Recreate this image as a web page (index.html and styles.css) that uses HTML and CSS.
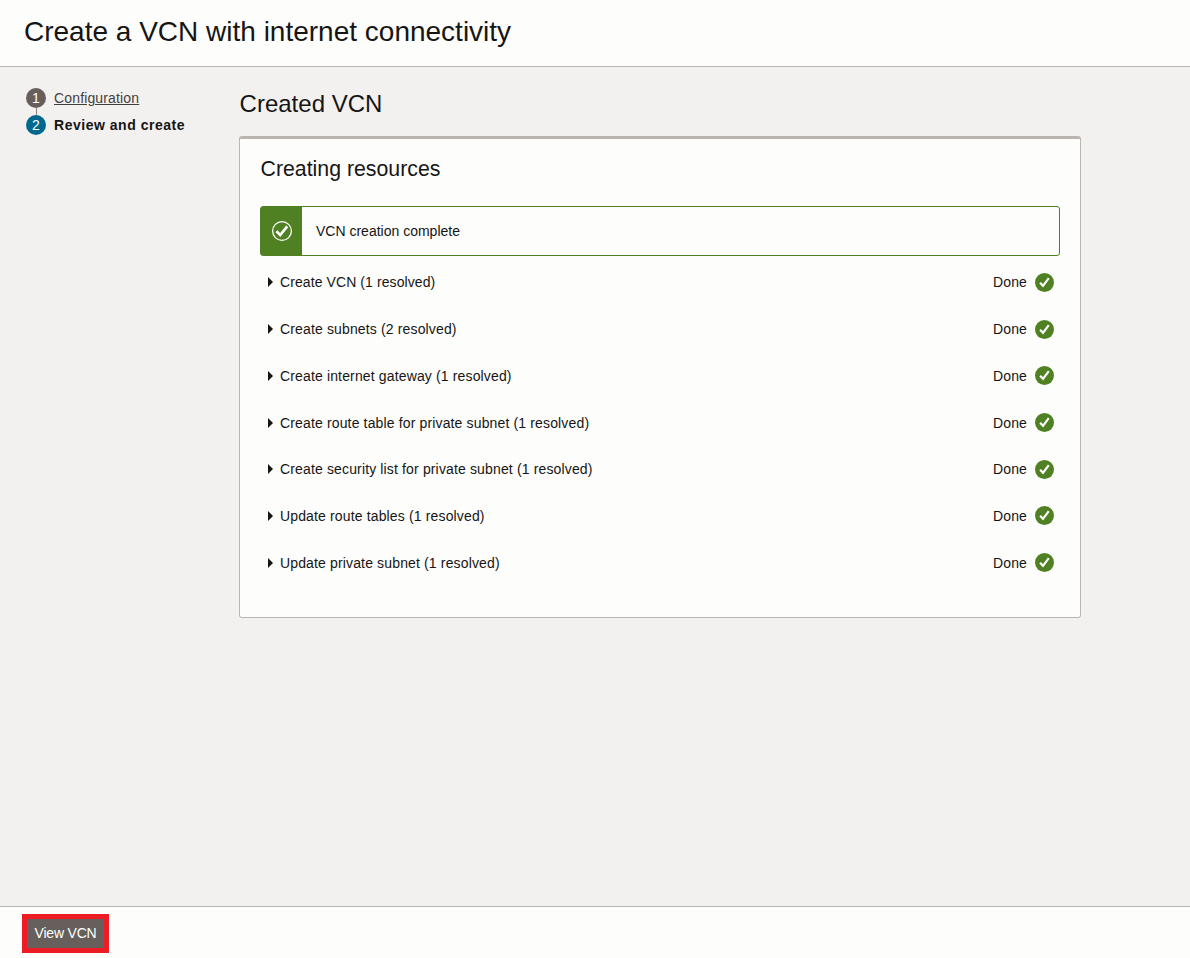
FILE: index.html
```html
<!DOCTYPE html>
<html lang="en">
<head>
<meta charset="utf-8">
<title>Create a VCN with internet connectivity</title>
<link rel="stylesheet" href="styles.css">
</head>
<body>
<svg class="defs" aria-hidden="true">
  <symbol id="done" viewBox="0 0 19 19"><circle cx="9.5" cy="9.5" r="9.5" fill="#4f8122"/><path d="M5.1 9.8 8 12.8 13.8 5.2" fill="none" stroke="#fff" stroke-width="2.2"/></symbol>
  <symbol id="caret" viewBox="0 0 5 10"><path d="M0 0 5 5 0 10Z" fill="#161513"/></symbol>
</svg>
<header class="header"><h1 class="title">Create a VCN with internet connectivity</h1></header>
<div class="body">
  <nav class="steps">
    <div class="step"><span class="num">1</span><a class="link">Configuration</a></div>
    <div class="connector"></div>
    <div class="step current"><span class="num">2</span><span class="label">Review and create</span></div>
  </nav>
  <main class="main">
    <h2 class="heading">Created VCN</h2>
    <section class="card">
      <h3 class="subheading">Creating resources</h3>
      <div class="notice">
        <div class="notice-icon"><svg width="22" height="22" viewBox="0 0 22 22" fill="none" stroke="#fff"><circle cx="11" cy="11" r="9.4" stroke-width="1.3"/><path d="M5.4 11.2 9.2 15 16.2 6.4" stroke-width="2.7"/></svg></div>
        <div class="notice-text">VCN creation complete</div>
      </div>
      <div class="rows">
        <div class="row"><svg class="caret"><use href="#caret"/></svg><span class="name">Create VCN (1 resolved)</span><span class="status">Done</span><svg class="done"><use href="#done"/></svg></div>
        <div class="row"><svg class="caret"><use href="#caret"/></svg><span class="name">Create subnets (2 resolved)</span><span class="status">Done</span><svg class="done"><use href="#done"/></svg></div>
        <div class="row"><svg class="caret"><use href="#caret"/></svg><span class="name">Create internet gateway (1 resolved)</span><span class="status">Done</span><svg class="done"><use href="#done"/></svg></div>
        <div class="row"><svg class="caret"><use href="#caret"/></svg><span class="name">Create route table for private subnet (1 resolved)</span><span class="status">Done</span><svg class="done"><use href="#done"/></svg></div>
        <div class="row"><svg class="caret"><use href="#caret"/></svg><span class="name">Create security list for private subnet (1 resolved)</span><span class="status">Done</span><svg class="done"><use href="#done"/></svg></div>
        <div class="row"><svg class="caret"><use href="#caret"/></svg><span class="name">Update route tables (1 resolved)</span><span class="status">Done</span><svg class="done"><use href="#done"/></svg></div>
        <div class="row"><svg class="caret"><use href="#caret"/></svg><span class="name">Update private subnet (1 resolved)</span><span class="status">Done</span><svg class="done"><use href="#done"/></svg></div>
      </div>
    </section>
  </main>
</div>
<footer class="footer"><button class="view">View VCN</button></footer>
</body>
</html>
```
FILE: styles.css
```css
* { box-sizing: border-box; }
body {
  margin: 0;
  height: 958px;
  display: flex;
  flex-direction: column;
  background: #f3f1f0;
  color: #161513;
  font: 14px/20px "Liberation Sans", Arial, sans-serif;
}
.defs { display: none; }
h1, h2, h3 { margin: 0; font-weight: 400; }
.header {
  height: 67px;
  padding: 16px 24px 0;
  background: #fdfdfc;
  border-bottom: 1px solid #bbb5b0;
}
.title { font-size: 28px; line-height: 32px; }
.body { flex: 1; display: flex; }
.steps { width: 239px; padding: 21px 0 0 26px; }
.step { display: flex; align-items: center; gap: 8px; height: 20px; }
.num {
  width: 20px;
  height: 20px;
  border-radius: 50%;
  background: #665f5b;
  color: #fff;
  text-align: center;
}
.current .num { background: #00688c; }
.current .label { font-weight: 700; letter-spacing: 0.52px; }
.link { color: #45403c; text-decoration: underline; letter-spacing: 0.15px; }
.connector { width: 1px; height: 7px; margin-left: 10px; background: #8b8580; }
.main { width: 842px; padding-top: 22px; }
.heading { padding-left: 0.6px; font-size: 24px; line-height: 30px; }
.card {
  height: 482px;
  margin-top: 17px;
  padding: 17px 20px 0;
  background: #fdfdfc;
  border: 1px solid #bbb5b0;
  border-top-width: 3px;
  border-radius: 3px;
}
.subheading { padding-left: 0.5px; font-size: 21.3px; line-height: 26px; }
.notice {
  display: flex;
  height: 50px;
  margin: 24px 0 3px;
  border: 1px solid #4f8122;
  border-radius: 3px;
}
.notice-icon {
  display: flex;
  align-items: center;
  justify-content: center;
  width: 41px;
  background: #4f8122;
}
.notice-text { padding-left: 14px; line-height: 48px; }
.row { display: flex; align-items: center; height: 46.72px; padding: 0 6px 0 8px; }
.caret { width: 5px; height: 10px; margin-right: 7px; }
.name { flex: 1; letter-spacing: 0.145px; }
.row:first-child .name { letter-spacing: 0.09px; }
.status { letter-spacing: 0.14px; }
.done { width: 19px; height: 19px; margin-left: 8px; }
.footer {
  height: 52px;
  padding: 7px 22px 0;
  background: #fdfdfc;
  border-top: 1px solid #b9b5b2;
}
.view {
  display: block;
  width: 87px;
  height: 39px;
  padding: 0 0 2px;
  border: 5px solid #ed1c24;
  background: #665f5b;
  color: #fff;
  font: inherit;
  letter-spacing: -0.2px;
}
```
